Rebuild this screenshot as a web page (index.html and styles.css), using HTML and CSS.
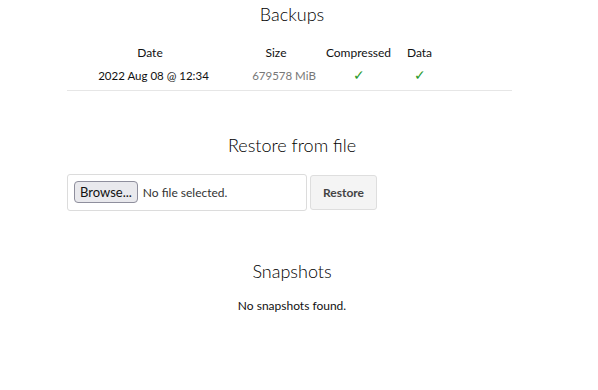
FILE: index.html
```html
<!DOCTYPE html>
<html>
<head>
<meta charset="utf-8">
<link rel="stylesheet" href="styles.css">
</head>
<body>
<div class="page">
  <section class="section backups">
    <h2 class="title">Backups</h2>
    <table class="table">
      <thead>
        <tr>
          <th class="c-date">Date</th>
          <th class="c-size">Size</th>
          <th class="c-comp">Compressed</th>
          <th class="c-data">Data</th>
          <th class="c-rest"></th>
        </tr>
      </thead>
      <tbody>
        <tr>
          <td class="c-date date">2022 Aug 08 @ 12:34</td>
          <td class="c-size muted">679578 MiB</td>
          <td class="c-comp check">✓</td>
          <td class="c-data check">✓</td>
          <td class="c-rest"></td>
        </tr>
      </tbody>
    </table>
  </section>

  <section class="section restore">
    <h2 class="title">Restore from file</h2>
    <div class="restore-row">
      <div class="file-box">
        <span class="browse">Browse...</span>
        <span class="file-name">No file selected.</span>
      </div>
      <button class="restore-btn">Restore</button>
    </div>
  </section>

  <section class="section snapshots">
    <h2 class="title">Snapshots</h2>
    <p class="empty">No snapshots found.</p>
  </section>
</div>
</body>
</html>
```

FILE: styles.css
```css
* { box-sizing: border-box; }
html, body { margin: 0; padding: 0; background: #fff; }
body {
  font-family: Lato, "Liberation Sans", sans-serif;
  font-size: 12px;
  color: #111;
}
.page {
  width: 445px;
  margin-left: 67px;
  display: flex;
  flex-direction: column;
}
.title {
  margin: 0;
  font-weight: 300;
  font-size: 18px;
  text-align: center;
  color: #000;
  line-height: 22px;
  padding-left: 5px;
}
.backups { padding-top: 3px; }
.backups .title { margin-bottom: 16px; }
.table {
  width: 100%;
  border-collapse: collapse;
  table-layout: fixed;
}
.table th, .table td {
  text-align: center;
  font-weight: 400;
  padding: 0;
  height: 23px;
  white-space: nowrap;
}
.table td {
  border-bottom: 1px solid #e6e6e6;
  height: 26px;
  padding-bottom: 3px;
  font-size: 11.5px;
}
.c-date { width: 166px; }
.c-size { width: 86px; }
.c-comp { width: 79px; }
.c-data { width: 43px; }
.table td.date { padding-left: 7px; }
.table td.muted { color: #777; padding-left: 16px; }
.table td.check { color: #2a9a2a; font-size: 14px; font-family: "DejaVu Sans", sans-serif; font-weight: 300; }

.restore { margin-top: 43px; }
.restore .title { margin-bottom: 18px; }
.restore-row { display: flex; gap: 3px; align-items: center; }
.file-box {
  width: 240px;
  height: 37px;
  border: 1px solid #dcdcdc;
  border-radius: 3px;
  display: flex;
  align-items: center;
  padding-left: 6px;
  gap: 5px;
}
.browse {
  border: 1px solid #8f8f9d;
  background: #e9e9ed;
  border-radius: 4px;
  height: 22px;
  padding: 0 5px 0 5px;
  display: inline-flex;
  align-items: center;
  font-size: 13px;
  color: #111;
}
.file-name { color: #333; }
.restore-btn {
  font-family: inherit;
  height: 35px;
  width: 67px;
  border: 1px solid #dedede;
  background: #f4f4f4;
  border-radius: 3px;
  font-weight: 700;
  font-size: 12px;
  color: #444;
}
.snapshots { margin-top: 49px; }
.snapshots .title { margin-bottom: 16px; }
.empty { margin: 0; text-align: center; padding-left: 5px; }
```
